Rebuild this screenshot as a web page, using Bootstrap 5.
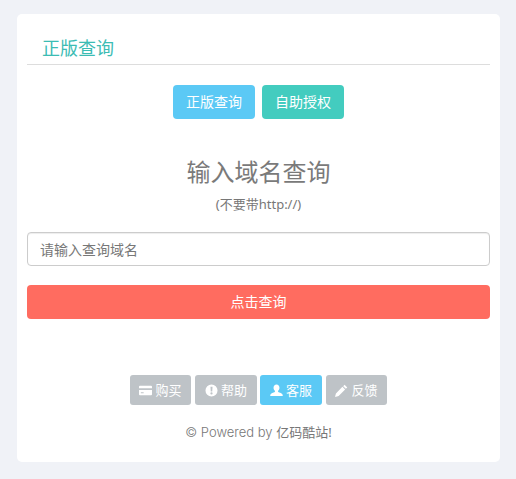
<!DOCTYPE html>
<html lang="zh">
<head>
<meta charset="utf-8">
<title>正版查询</title>
<link href="https://cdn.jsdelivr.net/npm/bootstrap@5.3.0/dist/css/bootstrap.min.css" rel="stylesheet">
<style>
html,body{height:100%}
body{background:#f0f2f7;font-family:"Noto Sans","Noto Sans CJK SC",sans-serif;font-size:14px;color:#777;padding:14px 16px 17px 17px;overflow:hidden}
.sheet{background:#fff;border-radius:5px;height:448px;padding:0 10px;display:flex;flex-direction:column}
.sheet-title{color:#3cbcb4;font-size:18px;line-height:24px;font-weight:400;margin:22px 0 0;padding:0 15px 2px;border-bottom:1px solid #ddd;height:29px}
.tabs-row{margin-top:20px;gap:7px}
.tab-btn{width:82px;height:34px;padding:0;border:0;border-radius:4px;font-size:14px;line-height:34px;color:#fff}
.tab-blue{background:#5bc9f5}
.tab-green{background:#43ccbf}
.tab-blue:hover{background:#5bc9f5;color:#fff}
.tab-green:hover{background:#43ccbf;color:#fff}
.query-head{font-size:24px;line-height:34px;color:#7a7a7a;font-weight:400;margin:36px 0 0;text-align:center}
.query-sub{font-size:13px;line-height:20px;color:#777;text-align:center;margin:5px 0 0}
.query-input{height:34px;margin-top:18px;padding:6px 12px;font-size:14px;border:1px solid #ccc;border-radius:4px;color:#555;box-shadow:inset 0 1px 1px rgba(0,0,0,.075)}
.query-input::placeholder{color:#777;opacity:1}
.query-go{height:34px;margin-top:19px;padding:0;border:0;border-radius:4px;background:#ff6c60;color:#fff;font-size:14px;line-height:34px}
.query-go:hover{background:#ff6c60;color:#fff}
.tools-row{margin-top:56px}
.tool-btn{width:61px;height:30px;padding:0;border:0;border-radius:3px;background:#bec3c7;color:#fff;font-size:13px;line-height:30px;display:flex;align-items:center;justify-content:center;gap:3px}
.tool-btn:hover{background:#bec3c7;color:#fff}
.tool-btn.tool-on,.tool-btn.tool-on:hover{background:#5bc9f5}
.tool-wide{width:62px}
.tool-third{margin-left:3px}
.tool-btn svg{width:13px;height:13px;fill:#fff;flex:none}
.foot-note{text-align:center;color:#777;font-size:13px;line-height:20px;margin:17px 0 0}
.foot-latin{font-family:Inter,"Noto Sans",sans-serif;font-weight:300}
</style>
</head>
<body>
<main class="sheet">
  <h2 class="sheet-title">正版查询</h2>
  <div class="d-flex justify-content-center tabs-row">
    <button type="button" class="btn tab-btn tab-blue">正版查询</button>
    <button type="button" class="btn tab-btn tab-green">自助授权</button>
  </div>
  <h3 class="query-head">输入域名查询</h3>
  <p class="query-sub">(不要带http://)</p>
  <input type="text" class="form-control query-input" placeholder="请输入查询域名">
  <button type="button" class="btn w-100 query-go">点击查询</button>
  <div class="d-flex justify-content-center tools-row">
    <a href="#" class="btn tool-btn"><svg viewBox="0 0 14 14"><path d="M1 2h12a1 1 0 0 1 1 1v8a1 1 0 0 1-1 1H1a1 1 0 0 1-1-1V3a1 1 0 0 1 1-1zM0 4.500v2h14v-2zM2 9v1h3V9z" fill-rule="evenodd"/></svg>购买</a>
    <a href="#" class="btn tool-btn tool-wide ms-1"><svg viewBox="0 0 14 14"><path d="M7 .5a6.500 6.500 0 1 1 0 13 6.500 6.500 0 0 1 0-13zM5.900 3l.3 5h1.600l.3-5zM7 9a1.200 1.200 0 1 0 0 2.400A1.200 1.200 0 0 0 7 9z" fill-rule="evenodd"/></svg>帮助</a>
    <a href="#" class="btn tool-btn tool-on tool-wide tool-third"><svg viewBox="0 0 14 14"><path d="M7 .5c1.900 0 3.200 1.500 3.200 3.500 0 1.400-.6 2.700-1.500 3.400v1.200c1.900.7 4.300 1.500 4.800 2.600.3.700.2 1.800.2 1.800H.3s-.1-1.100.2-1.800c.5-1.100 2.900-1.900 4.800-2.600V7.400C4.400 6.700 3.800 5.400 3.800 4 3.800 2 5.100.5 7 .5z"/></svg>客服</a>
    <a href="#" class="btn tool-btn ms-1"><svg viewBox="0 0 14 14"><path d="M10.300.8l2.900 2.900-1.500 1.500-2.900-2.900zM8 3l2.900 2.900-7 7L0 14l1-3.900z"/></svg>反馈</a>
  </div>
  <p class="foot-note"><span class="foot-latin">© Powered by </span>亿码酷站!</p>
</main>
<script src="https://cdn.jsdelivr.net/npm/bootstrap@5.3.0/dist/js/bootstrap.bundle.min.js"></script>
</body>
</html>
